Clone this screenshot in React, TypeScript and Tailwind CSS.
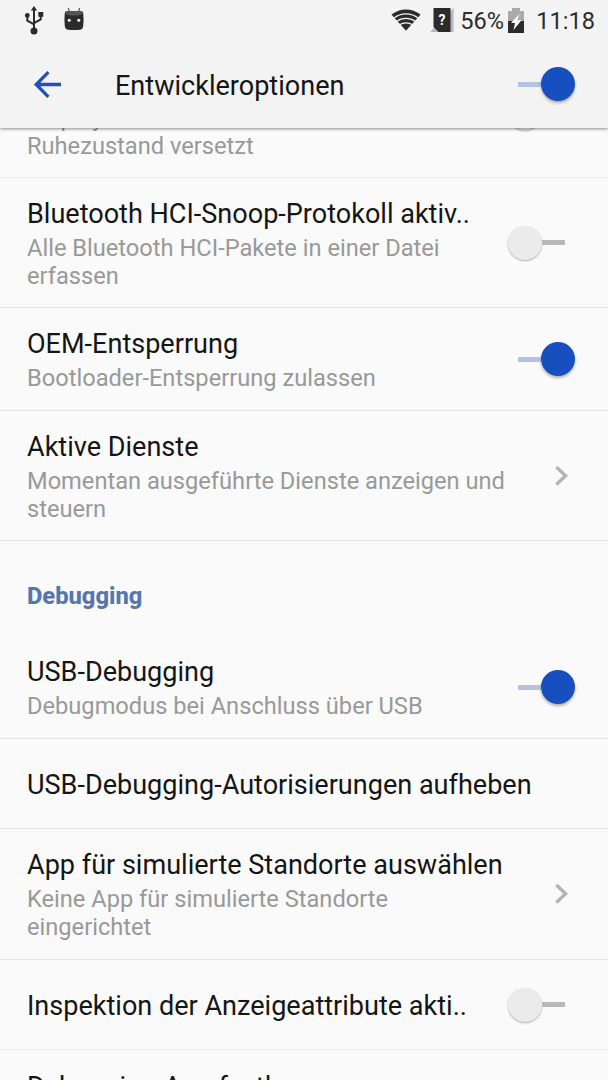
import { clsx } from 'clsx';

type Setting = {
  title: string;
  summary?: string[];
  height: string;
  control?: 'on' | 'off' | 'link';
};

const general: Setting[] = [
  // scrolled up under the app bar, only the end of its summary shows
  {
    title: '',
    summary: ['Display wird beim Laden nie in den', 'Ruhezustand versetzt'],
    height: 'h-[130px]',
    control: 'off',
  },
  {
    title: 'Bluetooth HCI-Snoop-Protokoll aktiv..',
    summary: ['Alle Bluetooth HCI-Pakete in einer Datei', 'erfassen'],
    height: 'h-[130px]',
    control: 'off',
  },
  { title: 'OEM-Entsperrung', summary: ['Bootloader-Entsperrung zulassen'], height: 'h-[103px]', control: 'on' },
  {
    title: 'Aktive Dienste',
    summary: ['Momentan ausgeführte Dienste anzeigen und', 'steuern'],
    height: 'h-[130px]',
    control: 'link',
  },
];

const debugging: Setting[] = [
  { title: 'USB-Debugging', summary: ['Debugmodus bei Anschluss über USB'], height: 'h-[103px]', control: 'on' },
  { title: 'USB-Debugging-Autorisierungen aufheben', height: 'h-[90px]' },
  {
    title: 'App für simulierte Standorte auswählen',
    summary: ['Keine App für simulierte Standorte', 'eingerichtet'],
    height: 'h-[131px]',
    control: 'link',
  },
  { title: 'Inspektion der Anzeigeattribute akti..', height: 'h-[90px]', control: 'off' },
  { title: 'Debugging-App festlegen', height: 'h-[72px]' },
];

const Toggle = ({ on }: { on: boolean }) => (
  <button
    role="switch"
    aria-checked={on}
    className={clsx('flex w-[67px] shrink-0 items-center', on ? 'justify-end' : 'flex-row-reverse justify-end')}
  >
    <span className={clsx('h-[5px] w-[23px]', on ? 'bg-[#b5c3e2]' : 'bg-[#b8b8b8]')} />
    <span
      className={clsx(
        'size-[34px] rounded-full',
        on ? 'bg-[#184fbe] shadow-[0_2px_3px_rgba(0,0,0,0.3)]' : 'bg-[#ebebeb] shadow-[0_1px_2px_rgba(0,0,0,0.3)]',
      )}
    />
  </button>
);

const Chevron = () => (
  <svg className="mr-[6px] h-5 w-[14px] shrink-0" viewBox="0 0 14 20" fill="none" stroke="#b4b4b4" strokeWidth="3.4">
    <path d="M1.4 1 L10.6 9.7 L1.4 18.4" />
  </svg>
);

const Row = ({ title, summary, height, control }: Setting) => (
  <div className={clsx('flex shrink-0 items-center border-b border-[#e6e6e6] pr-[33px] pl-[27px]', height)}>
    <div className={clsx('min-w-0 flex-1 whitespace-nowrap', !summary && 'pt-[5px]')}>
      <p className="h-[38px] text-[27.05px] leading-[37px] text-[#151515]">{title}</p>
      {summary?.map((line) => (
        <p key={line} className="text-[23.65px] leading-[28px] text-[#999]">{line}</p>
      ))}
    </div>
    {control === 'link' && <Chevron />}
    {(control === 'on' || control === 'off') && <Toggle on={control === 'on'} />}
  </div>
);

const StatusBar = () => (
  <div className="flex h-10 items-center text-[23.6px] leading-none text-[#2d2d2d]">
    {/* usb */}
    <svg className="ml-6 h-[29px] w-5" viewBox="0 0 20 29" fill="none" stroke="#2b2b2b" strokeWidth="2">
      <path d="M10 4 V25 M3.3 9 V14.6 L10 18.4 M16.7 9 V13.4 L10 17.2" />
      <path d="M10 0 L13.2 4.6 H6.8 Z" fill="#2b2b2b" stroke="none" />
      <circle cx="3.3" cy="9.5" r="2.4" fill="#2b2b2b" stroke="none" />
      <rect x="14.3" y="6" width="5" height="4.8" fill="#2b2b2b" stroke="none" />
      <circle cx="10" cy="25" r="3.5" fill="#2b2b2b" stroke="none" />
    </svg>
    {/* android head */}
    <svg className="mb-[3px] ml-5 h-6 w-5" viewBox="0 0 20 24">
      <path d="M5.4 5 L4.3 .8 M14.6 5 L15.6 .8" stroke="#555" strokeWidth="1.2" />
      <path d="M3.5 4 H16.5 Q19.2 4 19.3 7 Q19.9 13 19.2 19 Q18.8 22.6 15.8 22.8 Q10 23.3 4.2 22.8 Q1.2 22.6 .8 19 Q.1 13 .7 7 Q.8 4 3.5 4 Z" fill="#2b2b2b" />
      <path d="M3.5 4 H16.5 Q18.6 4 18.8 6.2 Q17 8.5 10 8.5 Q3 8.5 1.2 6.2 Q1.4 4 3.5 4 Z" fill="#555" />
      <circle cx="5.2" cy="13.3" r="1.5" fill="#fff" />
      <circle cx="14.8" cy="13.3" r="1.5" fill="#fff" />
    </svg>
    {/* wifi */}
    <svg className="ml-auto h-[22px] w-[30px]" viewBox="0 0 30 22">
      <path d="M.4 5.6 Q7 .4 15 .4 Q23 .4 29.6 5.6 L15 21.8 Z" fill="#2b2b2b" />
      <g fill="none" stroke="#f3f3f3" strokeWidth="1.2">
        <path d="M2.5 9.4 Q8 4.9 15 4.9 Q22 4.9 27.5 9.4" />
        <path d="M5.5 12.6 Q9.8 9.4 15 9.4 Q20.2 9.4 24.5 12.6" />
        <path d="M8.6 15.8 Q11.4 13.8 15 13.8 Q18.6 13.8 21.4 15.8" />
      </g>
    </svg>
    {/* sim without network */}
    <svg className="ml-[9px] h-6 w-6" viewBox="0 0 24 24">
      <path d="M23.5 0 V24 H0 Z" fill="#b8b8b8" />
      <path d="M3.5 0 H20.5 V24 H8.5 L3.5 19 Z" fill="#2b2b2b" />
      <text x="12" y="16.5" textAnchor="middle" fontSize="14" fontWeight="700" fill="#fff" fontFamily="Roboto, sans-serif">?</text>
    </svg>
    <span className="ml-[6px] w-11 pt-[3px] whitespace-nowrap">56%</span>
    {/* battery charging */}
    <svg className="ml-[4px] h-[25px] w-4" viewBox="0 0 16 25">
      <path d="M4 0 H12 V3 H16 V25 H0 V3 H4 Z" fill="#aaa" />
      <path d="M0 13 H16 V25 H0 Z" fill="#2b2b2b" />
      <path d="M11.5 6 L3 15 H7 L5.5 22 L13.5 12.2 H9.2 Z" fill="#fff" />
    </svg>
    <span className="mr-[13px] ml-[12px] pt-[3px]">11:18</span>
  </div>
);

export default function App() {
  return (
    <div className="flex h-[1080px] w-[608px] flex-col overflow-hidden bg-[#fafafa] font-[Roboto,sans-serif]">
      <header className="z-10 h-32 shrink-0 bg-[#f3f3f3] shadow-[0_1px_3px_rgba(0,0,0,0.45)]">
        <StatusBar />
        <div className="flex h-[88px] items-center pr-[33px] pl-[33px]">
          <svg className="h-[27px] w-[28px]" viewBox="0 0 28 27" fill="none" stroke="#2450b3" strokeWidth="3.3">
            <path d="M28 13.5 H3.5 M15.4 1.2 L3.2 13.5 L15.4 25.8" />
          </svg>
          <h1 className="ml-[54px] flex-1 pt-[4px] text-[27.05px] text-[#151515]">Entwickleroptionen</h1>
          <Toggle on />
        </div>
      </header>

      <main className="-mt-20 flex flex-col">
        {general.map((s) => (
          <Row key={s.title} {...s} />
        ))}
        <h2 className="flex h-[95px] shrink-0 items-center pt-[16px] pl-[27px] text-[23.7px] font-extrabold text-[#5676ae]">
          Debugging
        </h2>
        {debugging.map((s) => (
          <Row key={s.title} {...s} />
        ))}
      </main>
    </div>
  );
}
